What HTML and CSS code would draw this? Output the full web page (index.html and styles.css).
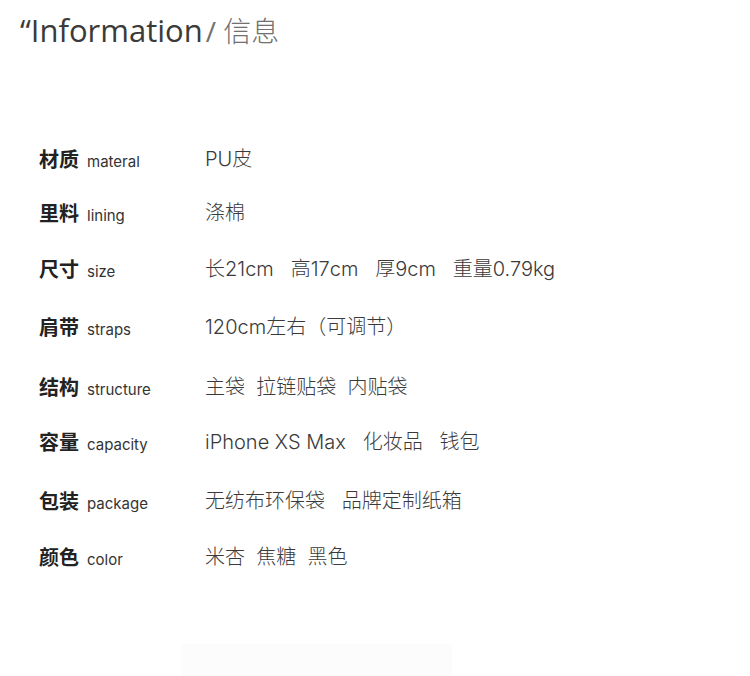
FILE: index.html
```html
<!DOCTYPE html>
<html lang="zh">
<head>
<meta charset="utf-8">
<title>Information / 信息</title>
<link rel="stylesheet" href="styles.css">
</head>
<body>
<div class="page">
  <h1 class="title"><span class="title-en">“Information</span><span class="title-cn">/ 信息</span></h1>
  <div class="specs">
    <div class="row"><div class="label"><b>材质</b><span>materal</span></div><div class="value">PU皮</div></div>
    <div class="row"><div class="label"><b>里料</b><span>lining</span></div><div class="value">涤棉</div></div>
    <div class="row"><div class="label"><b>尺寸</b><span>size</span></div><div class="value">长21cm&nbsp;&nbsp;&nbsp;高17cm&nbsp;&nbsp;&nbsp;厚9cm&nbsp;&nbsp;&nbsp;重量0.79kg</div></div>
    <div class="row"><div class="label"><b>肩带</b><span>straps</span></div><div class="value">120cm左右（可调节）</div></div>
    <div class="row"><div class="label"><b>结构</b><span>structure</span></div><div class="value">主袋&nbsp;&nbsp;拉链贴袋&nbsp;&nbsp;内贴袋</div></div>
    <div class="row"><div class="label"><b>容量</b><span>capacity</span></div><div class="value">iPhone XS Max&nbsp;&nbsp;&nbsp;化妆品&nbsp;&nbsp;&nbsp;钱包</div></div>
    <div class="row"><div class="label"><b>包装</b><span>package</span></div><div class="value">无纺布环保袋&nbsp;&nbsp;&nbsp;品牌定制纸箱</div></div>
    <div class="row"><div class="label"><b>颜色</b><span>color</span></div><div class="value">米杏&nbsp;&nbsp;焦糖&nbsp;&nbsp;黑色</div></div>
  </div>
  <div class="footer-box"></div>
</div>
</body>
</html>
```
FILE: styles.css
```css
html, body {
  margin: 0;
  padding: 0;
  background: #ffffff;
}
body {
  font-family: "Open Sans", "Noto Sans CJK SC", sans-serif;
  color: #333333;
}
.page {
  width: 750px;
  height: 676px;
  overflow: hidden;
  display: flex;
  flex-direction: column;
}
.title {
  margin: 0;
  padding: 10px 0 0 20px;
  height: 50px;
  font-weight: 400;
  line-height: 40px;
  white-space: nowrap;
}
.title-en {
  font-size: 31px;
  color: #3a3a3a;
}
.title-cn {
  font-family: "Open Sans", "Noto Sans CJK SC Light", "Noto Sans CJK SC", sans-serif;
  font-size: 28px;
  color: #707070;
  margin-left: 3px;
}
.specs {
  margin-top: 84px;
  padding-left: 39px;
  display: grid;
  grid-template-rows: 54px 56px 58px 60px 55px 59px 56px 40px;
}
.row {
  display: flex;
  align-items: flex-start;
  height: 30px;
}
.label {
  width: 166px;
  flex: none;
  white-space: nowrap;
  line-height: 30px;
}
.label b {
  font-family: "Noto Sans CJK SC", sans-serif;
  font-size: 20px;
  font-weight: 700;
  color: #222;
  margin-right: 8px;
}
.label span {
  font-family: "Inter", "Open Sans", sans-serif;
  font-size: 15px;
  color: #333;
}
.value {
  font-family: "Inter", "Noto Sans CJK SC Light", "Noto Sans CJK SC", sans-serif;
  font-size: 20px;
  font-weight: 300;
  color: #3a3a3a;
  line-height: 30px;
  white-space: nowrap;
}
.footer-box {
  margin: auto 0 0 182px;
  width: 270px;
  height: 32px;
  background: #fcfcfc;
}
```
